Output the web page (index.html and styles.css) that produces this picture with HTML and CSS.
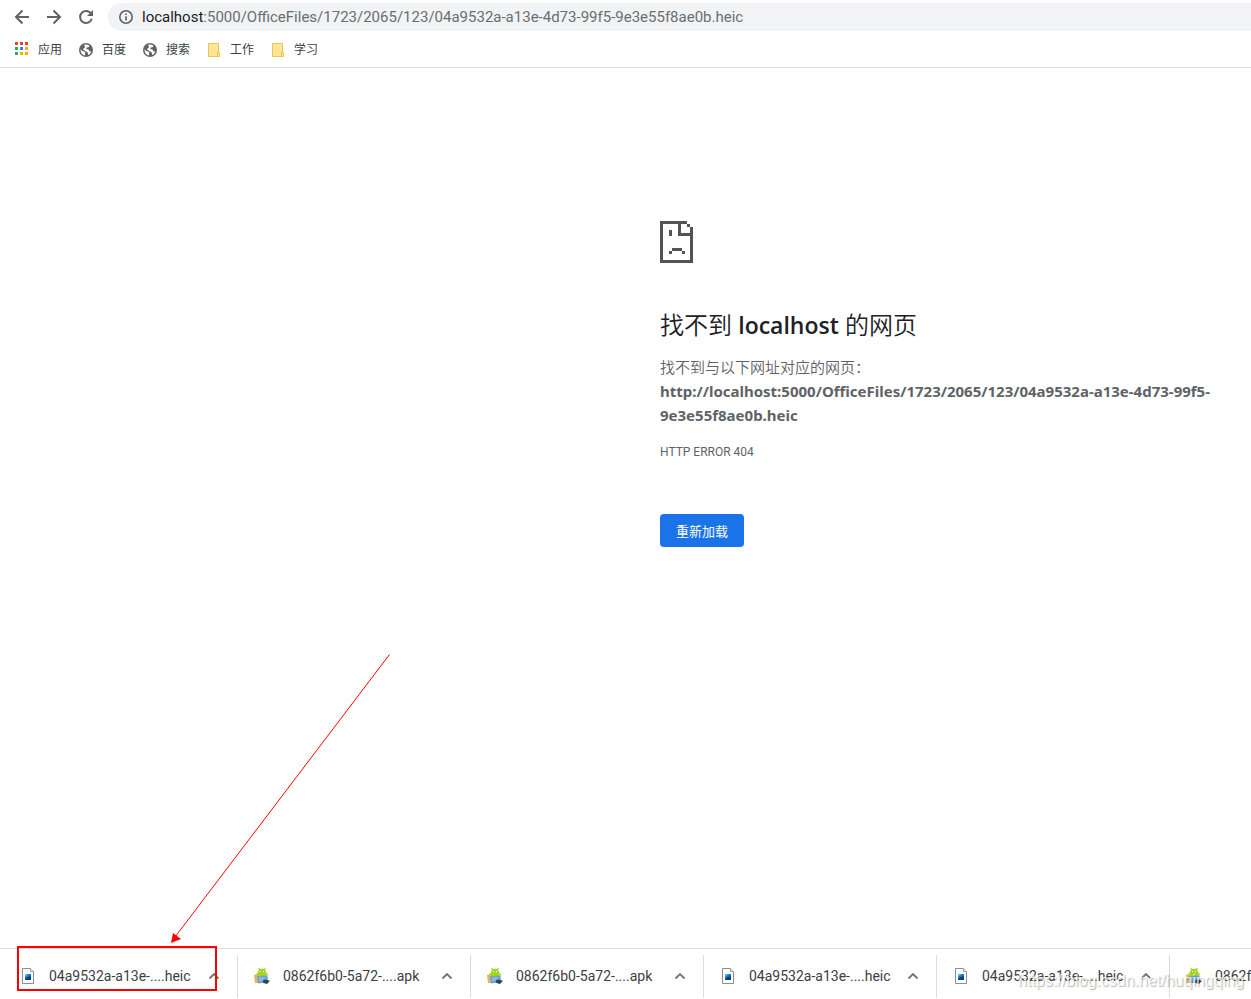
FILE: index.html
```html
<!DOCTYPE html>
<html lang="zh-CN">
<head>
<meta charset="utf-8">
<title>localhost</title>
<link rel="stylesheet" href="styles.css">
</head>
<body>
<svg class="defs" width="0" height="0" aria-hidden="true">
  <symbol id="globe" viewBox="0 0 16 16">
    <circle cx="8" cy="8" r="7" fill="#5f6368"/>
    <path d="M2.6 7.2 L4.3 8.9 L6.2 9.4 L7.2 10.6 L7 13.4 C4.2 13 2.4 10.6 2.6 7.2 Z" fill="#fff"/>
    <path d="M6.2 2.9 C8 2.2 9.8 2.4 11.3 3.5 L10.6 5.3 L8.6 5.6 L8.3 7 L10.6 7.6 L11.4 9.2 L13.2 9.4 C12.7 11 11.6 12.3 10.2 12.9 L9.8 10.7 L8.4 9.4 L6 8.2 L5 7 L7 5.4 Z" fill="#fff"/>
  </symbol>
  <symbol id="folder" viewBox="0 0 16 16">
    <path d="M2.5 1.5 H12.5 V10 H13.5 V14.5 H2.5 Z" fill="#ffe694" stroke="#e8c557"/>
    <path d="M11.5 14 V10.5 H13" fill="none" stroke="#e8c557"/>
  </symbol>
  <symbol id="image-file" viewBox="0 0 16 16">
    <path d="M2.5 .5 H10.5 L13.5 3.5 V15.5 H2.5 Z" fill="#fff" stroke="#8c8c8c"/>
    <path d="M10.5 .5 V3.5 H13.5" fill="#eee" stroke="#a0a0a0"/>
    <path d="M5 6 H11 V12 H5 Z" fill="#1477cf"/>
    <path d="M5 6 H9 L5 9 Z" fill="#4eb9ef"/>
    <path d="M5 11 L8 9 L11 8 V12 H5 Z" fill="#0b3e7c"/>
  </symbol>
  <symbol id="apk-file" viewBox="0 0 16 16">
    <path d="M0 7 L4 6 L5 15 L1 15 Z" fill="#e2b65d"/>
    <path d="M3.5 8 C3 3.5 4.8 .8 8 .8 S13 3.5 12.5 8 Z" fill="#a4d51f"/>
    <path d="M4.5 0 L6 2 M11.5 0 L10 2" stroke="#8dbb22"/>
    <path d="M2 7 L4 5.5 M12 5.5 L14 7" stroke="#b5dd42" stroke-width="2"/>
    <path d="M6 3.5 H7 M9 3.5 H10" stroke="#fff"/>
    <path d="M3 8 L13.5 7.5 L14 14 L4 15.5 Z" fill="#6ea3cf"/>
    <path d="M5 10 H11 M5 12 H9" stroke="#a9cbe6"/>
    <path d="M8.5 13 L11 11.5 L16 12.7 L13 16 L9.5 15 Z" fill="#25465f"/>
  </symbol>
  <symbol id="chevron" viewBox="0 0 12 12">
    <path d="M1.5 8.5 L6 4 L10.5 8.5" fill="none" stroke="#70757a" stroke-width="1.8"/>
  </symbol>
</svg>

<header class="browser-bar">
  <div class="toolbar">
    <button class="nav-button" type="button" aria-label="后退">
      <svg viewBox="0 0 16 16"><path d="M15 8 H2.5 M8.5 1.5 L2 8 L8.5 14.5" fill="none" stroke="#5f6368" stroke-width="2"/></svg>
    </button>
    <button class="nav-button" type="button" aria-label="前进">
      <svg viewBox="0 0 16 16"><path d="M1 8 H13.5 M7.5 1.5 L14 8 L7.5 14.5" fill="none" stroke="#5f6368" stroke-width="2"/></svg>
    </button>
    <button class="nav-button" type="button" aria-label="重新加载此页">
      <svg viewBox="0 0 16 16"><path d="M13.2 4.8 A6 6 0 1 0 13.8 9.8" fill="none" stroke="#5f6368" stroke-width="2"/><path d="M15 1 V7 H9 Z" fill="#5f6368"/></svg>
    </button>
    <div class="address">
      <svg class="info" viewBox="0 0 16 16" aria-hidden="true"><circle cx="8" cy="8" r="6.2" fill="none" stroke="#5f6368" stroke-width="1.6"/><path d="M8 7.2 V11.5 M8 4.5 V6" stroke="#5f6368" stroke-width="1.6"/></svg>
      <div class="url" role="textbox" contenteditable="true" spellcheck="false" aria-label="地址"><span class="host">localhost</span>:5000/OfficeFiles/1723/2065/123/04a9532a-a13e-4d73-99f5-9e3e55f8ae0b.heic</div>
    </div>
  </div>
  <nav class="bookmarks" aria-label="书签">
    <a class="bookmark" href="#"><svg class="bookmark-icon" viewBox="0 0 16 16" shape-rendering="crispEdges"><path d="M1 0h3v3h-3z M6 0h3v3h-3z M11 0h3v3h-3z" fill="#ea4335"/><path d="M1 5h3v3h-3z M1 10h3v3h-3z" fill="#34a853"/><path d="M6 5h3v3h-3z" fill="#1a8cff"/><path d="M11 5h3v3h-3z M6 10h3v3h-3z M11 10h3v3h-3z" fill="#f9ab00"/></svg>应用</a>
    <a class="bookmark" href="#"><svg class="bookmark-icon"><use href="#globe"/></svg>百度</a>
    <a class="bookmark" href="#"><svg class="bookmark-icon"><use href="#globe"/></svg>搜索</a>
    <a class="bookmark" href="#"><svg class="bookmark-icon"><use href="#folder"/></svg>工作</a>
    <a class="bookmark" href="#"><svg class="bookmark-icon"><use href="#folder"/></svg>学习</a>
  </nav>
</header>

<main class="page">
  <section class="error">
    <svg class="sad-page" viewBox="0 0 33 42" shape-rendering="crispEdges" aria-hidden="true">
      <path fill="#535353" d="M0 0H27V3H3V39H30V15H18V3H21V12H30V6H33V42H0Z"/>
      <path fill="#535353" d="M27 3H30V6H27Z M9 9H12V15H9Z M12 27H22V30H12Z M9 30H12V33H9Z M22 30H25V33H22Z"/>
    </svg>
    <h1 class="title">找不到 <span class="title-host">localhost</span> 的网页</h1>
    <p class="message">找不到与以下网址对应的网页：<strong class="failed-url">http://localhost:5000/OfficeFiles/1723/2065/123/04a9532a-a13e-4d73-99f5-9e3e55f8ae0b.heic</strong></p>
    <p class="code">HTTP ERROR 404</p>
    <button class="reload" type="button">重新加载</button>
  </section>
</main>

<footer class="downloads">
  <div class="download"><svg class="file-icon"><use href="#image-file"/></svg><a class="file-name" href="#">04a9532a-a13e-....heic</a><button class="more" type="button" aria-label="更多"><svg><use href="#chevron"/></svg></button></div>
  <div class="download"><svg class="file-icon"><use href="#apk-file"/></svg><a class="file-name" href="#">0862f6b0-5a72-....apk</a><button class="more" type="button" aria-label="更多"><svg><use href="#chevron"/></svg></button></div>
  <div class="download"><svg class="file-icon"><use href="#apk-file"/></svg><a class="file-name" href="#">0862f6b0-5a72-....apk</a><button class="more" type="button" aria-label="更多"><svg><use href="#chevron"/></svg></button></div>
  <div class="download"><svg class="file-icon"><use href="#image-file"/></svg><a class="file-name" href="#">04a9532a-a13e-....heic</a><button class="more" type="button" aria-label="更多"><svg><use href="#chevron"/></svg></button></div>
  <div class="download"><svg class="file-icon"><use href="#image-file"/></svg><a class="file-name" href="#">04a9532a-a13e-....heic</a><button class="more" type="button" aria-label="更多"><svg><use href="#chevron"/></svg></button></div>
  <div class="download"><svg class="file-icon"><use href="#apk-file"/></svg><a class="file-name" href="#">0862f6b0-5a72-....apk</a><button class="more" type="button" aria-label="更多"><svg><use href="#chevron"/></svg></button></div>
  <span class="watermark">https://blog.csdn.net/huqingqing</span>
</footer>

<svg class="annotation" viewBox="0 0 400 349" aria-hidden="true">
  <path d="M389.5 4.5 L175 287" stroke="#f00" fill="none"/>
  <path d="M171 293 L173 283 L181 289 Z" fill="#f00"/>
  <rect x="18" y="297" width="198" height="43" fill="none" stroke="#f00" stroke-width="2"/>
</svg>
</body>
</html>
```
FILE: styles.css
```css
* {
  box-sizing: border-box;
}

body {
  margin: 0;
  min-height: 100vh;
  display: flex;
  flex-direction: column;
  position: relative;
  overflow-x: hidden;
  background: #fff;
  color: #3c4043;
  font-family: "Noto Sans", "Noto Sans CJK SC", sans-serif;
}

button {
  font: inherit;
  border: 0;
  padding: 0;
  background: none;
}

a {
  color: inherit;
  text-decoration: none;
}

.defs {
  position: absolute;
}

.browser-bar {
  border-bottom: 1px solid #dadce0;
}

.toolbar {
  display: flex;
  align-items: center;
  gap: 16px;
  padding: 3px 0 0 14px;
}

.nav-button {
  width: 16px;
  height: 16px;
}

.nav-button svg {
  display: block;
  width: 16px;
  height: 16px;
}

.address {
  flex: 1;
  min-width: 0;
  display: flex;
  align-items: center;
  gap: 8px;
  height: 28px;
  margin-left: -2px;
  padding-left: 10px;
  border-radius: 14px 0 0 14px;
  background: #f1f3f4;
}

.info {
  flex: none;
  width: 16px;
  height: 16px;
}

.url {
  overflow: hidden;
  white-space: nowrap;
  color: #6a6e73;
  font-family: Roboto, "Noto Sans", sans-serif;
  font-size: 15px;
  line-height: 28px;
}

.host {
  color: #202124;
}

.bookmarks {
  display: flex;
  gap: 16px;
  height: 36px;
  padding: 1px 0 0 14px;
  align-items: center;
  font-size: 12px;
  line-height: 16px;
}

.bookmark {
  display: flex;
  align-items: center;
  gap: 8px;
}

.bookmark-icon {
  width: 16px;
  height: 16px;
}

.page {
  flex: 1;
  display: flex;
  justify-content: flex-end;
  padding: 153px 0 40px 24px;
}

.error {
  flex: 0 1 591px;
  min-width: 0;
  padding-right: 32px;
  color: #5f6368;
}

.sad-page {
  display: block;
  width: 33px;
  height: 42px;
}

.title {
  margin: 47px 0 15px;
  color: #202124;
  font-family: "Open Sans", "Noto Sans CJK SC", sans-serif;
  font-size: 24px;
  font-weight: 350;
  line-height: 30px;
}

.title-host {
  font-size: 23px;
  font-weight: 600;
}

.message {
  margin: 0;
  font-size: 15px;
  font-weight: 350;
  line-height: 24px;
}

.failed-url {
  display: block;
  font-weight: 700;
}

.code {
  margin: 15px 0 0;
  font-family: Roboto, "Noto Sans", sans-serif;
  font-size: 12px;
  line-height: 20px;
}

.reload {
  margin-top: 52px;
  padding: 0 16px;
  height: 33px;
  border-radius: 4px;
  background: #1a73e8;
  color: #fff;
  font-size: 13px;
}

.downloads {
  position: relative;
  display: flex;
  height: 51px;
  padding: 6px 0 1px;
  overflow: hidden;
  border-top: 1px solid #dadce0;
}

.download {
  flex: none;
  display: flex;
  align-items: center;
  width: 233px;
  padding: 0 17px 2px 16px;
  border-right: 1px solid #dadce0;
}

.download:first-child {
  width: 238px;
  padding-left: 20px;
}

.file-icon {
  flex: none;
  width: 16px;
  height: 16px;
}

.file-name {
  margin-left: 13px;
  font-family: Roboto, "Noto Sans", sans-serif;
  font-size: 14px;
  white-space: nowrap;
}

.more {
  width: 12px;
  height: 12px;
  margin-left: auto;
}

.more svg {
  display: block;
  width: 12px;
  height: 12px;
}

.watermark {
  position: absolute;
  right: 7px;
  bottom: 7px;
  color: rgba(255, 255, 255, 0.8);
  font-family: "Liberation Sans", sans-serif;
  font-size: 16px;
  line-height: 22px;
  text-shadow: 1px 1px 1px rgba(0, 0, 0, 0.3);
}

.annotation {
  position: absolute;
  left: 0;
  bottom: 0;
  width: 400px;
  height: 349px;
  pointer-events: none;
}
```
